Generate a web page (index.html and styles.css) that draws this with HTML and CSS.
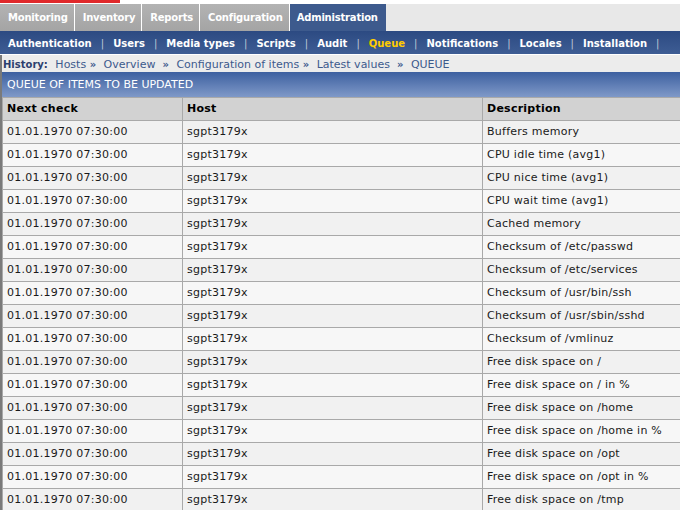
FILE: index.html
```html
<!DOCTYPE html>
<html lang="en">
<head>
    <meta charset="UTF-8">
    <title>Queue - Administration</title>
    <link rel="stylesheet" href="styles.css">
</head>
<body>
<div class="page">

    <!-- Top strip -->
    <div class="top-strip"><div class="logo-line"></div></div>

    <!-- Main menu -->
    <div class="main-menu">
        <a class="tab">Monitoring</a>
        <a class="tab">Inventory</a>
        <a class="tab">Reports</a>
        <a class="tab">Configuration</a>
        <a class="tab active">Administration</a>
        <div class="tab-rest"></div>
    </div>

    <!-- Sub menu -->
    <div class="sub-menu">
        <a>Authentication</a><span class="sep">|</span>
        <a>Users</a><span class="sep">|</span>
        <a>Media types</a><span class="sep">|</span>
        <a>Scripts</a><span class="sep">|</span>
        <a>Audit</a><span class="sep">|</span>
        <a class="current">Queue</a><span class="sep">|</span>
        <a>Notifications</a><span class="sep">|</span>
        <a>Locales</a><span class="sep">|</span>
        <a>Installation</a><span class="sep">|</span>
    </div>

    <div class="content">
        <!-- History -->
        <div class="history">
            <b>History:</b>
            <a>Hosts</a> <span class="arr">&raquo;</span>
            <a>Overview</a> &nbsp;<span class="arr">&raquo;</span>
            <a>Configuration of items</a> <span class="arr">&raquo;</span>
            <a>Latest values</a> &nbsp;<span class="arr">&raquo;</span>
            <a>QUEUE</a>
        </div>

        <div class="title-bar">QUEUE OF ITEMS TO BE UPDATED</div>

        <table class="queue">
            <colgroup>
                <col class="c-time">
                <col class="c-host">
                <col>
            </colgroup>
            <thead>
                <tr><th>Next check</th><th>Host</th><th>Description</th></tr>
            </thead>
            <tbody id="queueRows"></tbody>
        </table>
    </div>
</div>

<script>
    // Items waiting in the queue
    var items = [
        'Buffers memory',
        'CPU idle time (avg1)',
        'CPU nice time (avg1)',
        'CPU wait time (avg1)',
        'Cached memory',
        'Checksum of /etc/passwd',
        'Checksum of /etc/services',
        'Checksum of /usr/bin/ssh',
        'Checksum of /usr/sbin/sshd',
        'Checksum of /vmlinuz',
        'Free disk space on /',
        'Free disk space on / in %',
        'Free disk space on /home',
        'Free disk space on /home in %',
        'Free disk space on /opt',
        'Free disk space on /opt in %',
        'Free disk space on /tmp'
    ];

    var body = document.getElementById('queueRows');
    items.forEach(function(desc, i) {
        var tr = document.createElement('tr');
        tr.className = i % 2 ? 'even' : 'odd';
        tr.innerHTML = '<td>01.01.1970 07:30:00</td><td>sgpt3179x</td><td>' + desc + '</td>';
        body.appendChild(tr);
    });
</script>
</body>
</html>
```

FILE: styles.css
```css
/* Global */
* {
    margin: 0;
    padding: 0;
    box-sizing: border-box;
}

body {
    font-family: "DejaVu Sans", Verdana, sans-serif;
    font-size: 11px;
    background-color: #ffffff;
    overflow: hidden;
}

.page {
    width: 720px;
}

/* Top strip */
.top-strip {
    height: 4px;
    background-color: #ffffff;
}

.logo-line {
    width: 120px;
    height: 3px;
    background-color: #e0282a;
}

/* Main menu */
.main-menu {
    display: flex;
    height: 27px;
}

.tab {
    display: flex;
    align-items: center;
    padding: 0 6px 0 8px;
    margin-right: 1px;
    font-size: 10px;
    font-weight: bold;
    letter-spacing: -0.2px;
    color: #ffffff;
    background: linear-gradient(#b3b3b3, #a4a4a4);
}

.tab.active {
    padding: 0 8px 0 7px;
    margin-right: 0;
    background: #3d5a8d;
}

.tab-rest {
    flex: 1;
    background-color: #e8e8e8;
}

/* Sub menu */
.sub-menu {
    display: flex;
    align-items: center;
    height: 23px;
    padding: 2px 0 0 8px;
    font-size: 10px;
    font-weight: bold;
    color: #ffffff;
    background: linear-gradient(#2c4a82, #3e5d94);
}

.sub-menu .current {
    color: #ffcc00;
}

.sub-menu .sep {
    font-weight: normal;
    color: #c0c8d8;
    padding: 0 9px;
}

/* Content */
.content {
    border-left: 2px solid #7a7a7a;
    margin-top: 1px;
}

.history {
    height: 17px;
    line-height: 17px;
    padding: 1px 0 0 1px;
    color: #3d5a8d;
    background-color: #ececec;
}

.history b {
    font-size: 10px;
    color: #2c3e6e;
}

.history a {
    margin-left: 4px;
}

.history .arr {
    font-size: 10px;
    font-weight: bold;
}

.title-bar {
    height: 25px;
    line-height: 25px;
    padding-left: 5px;
    font-size: 11px;
    color: #ffffff;
    background: linear-gradient(#3d60a0, #7f99c8);
}

/* Queue table */
.queue {
    width: 100%;
    border-collapse: collapse;
    table-layout: fixed;
}

.c-time {
    width: 180px;
}

.c-host {
    width: 300px;
}

.queue th,
.queue td {
    height: 23px;
    padding: 0 4px 2px;
    text-align: left;
    border: 1px solid #a9a9a9;
    white-space: nowrap;
    letter-spacing: 0.25px;
}

.queue th {
    font-weight: bold;
    background-color: #d2d2d2;
}

.queue td {
    color: #1a1a1a;
}

.queue tr.odd td {
    background-color: #f1f1f1;
}

.queue tr.even td {
    background-color: #f7f7f7;
}
```
